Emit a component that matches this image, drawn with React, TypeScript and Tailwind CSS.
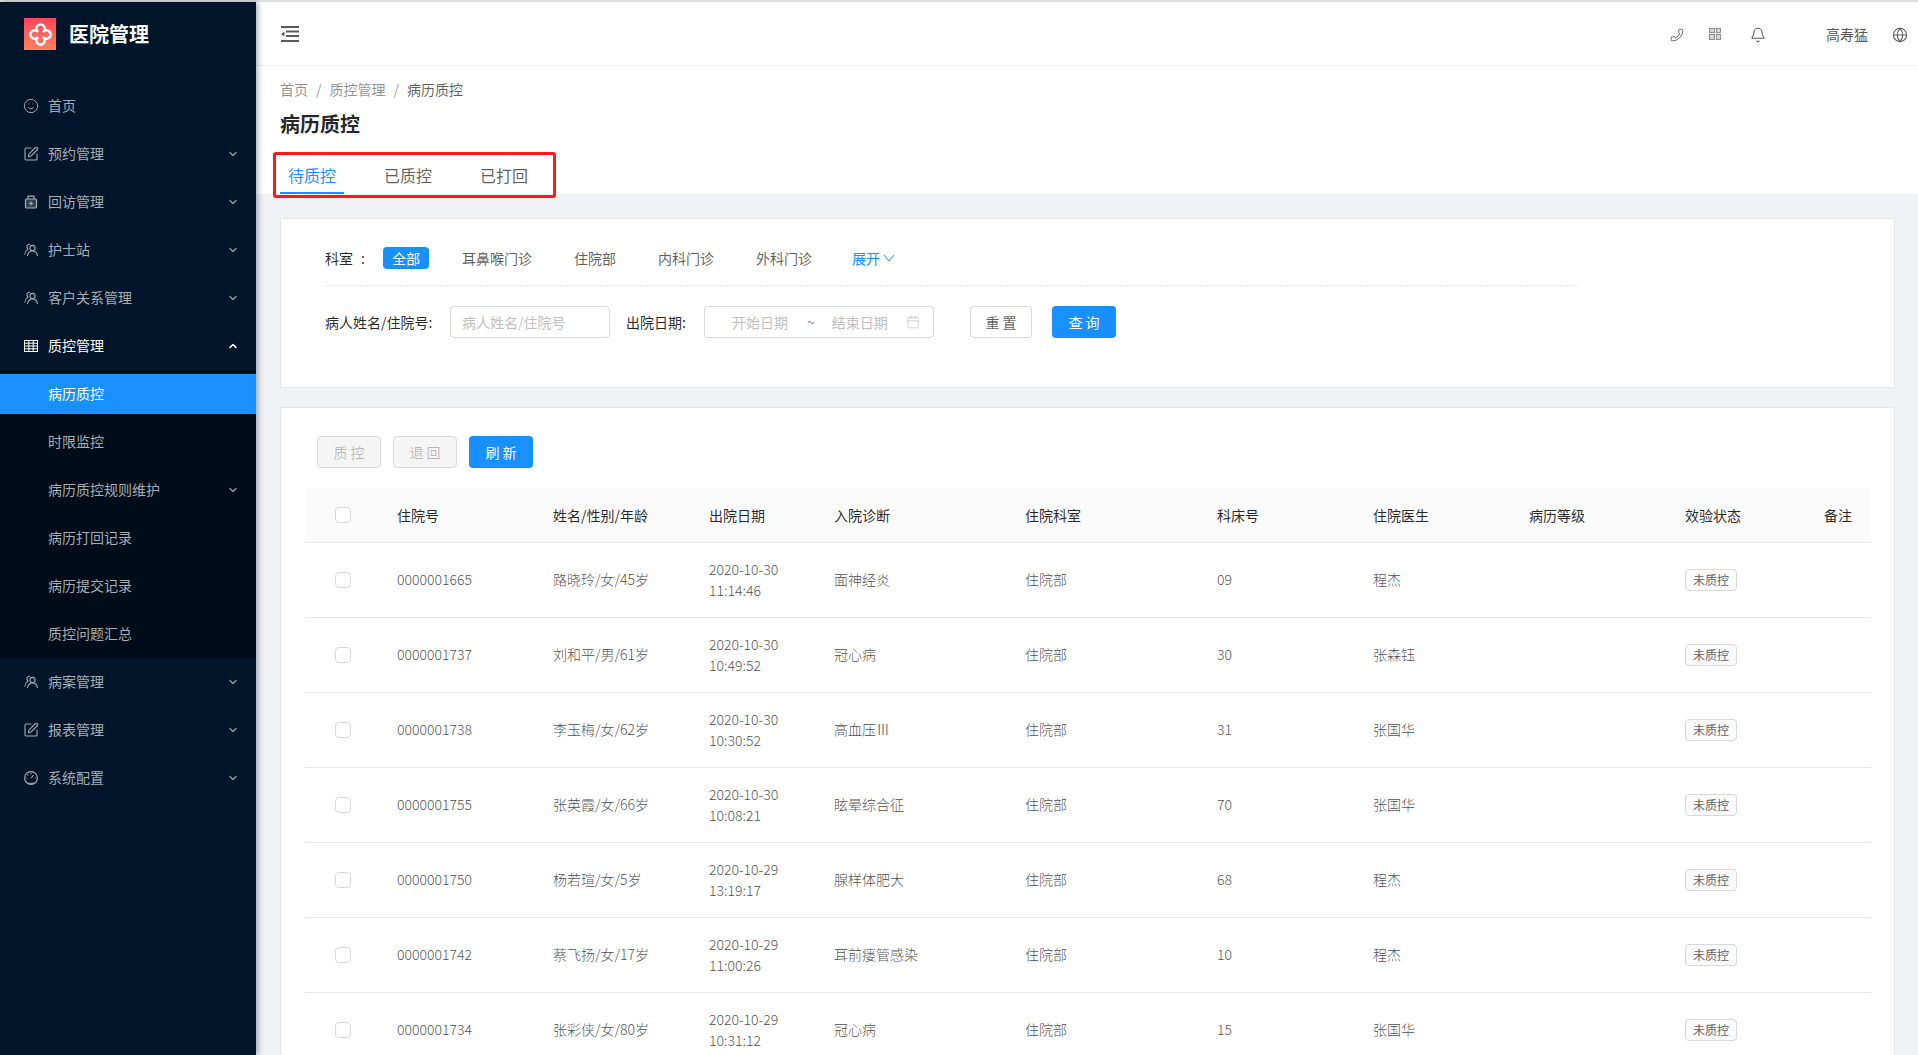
import React from "react";
import { ChevronDown, ChevronUp, Smile, SquarePen, Phone, Bell, Globe, Calendar } from "lucide-react";

const FONT = "font-['Noto_Sans_CJK_SC','Noto_Sans',sans-serif]";

function TeamIcon() {
  return (
    <svg viewBox="-1 -1 16 16" className="h-4 w-4" fill="none" stroke="currentColor" strokeWidth="1.1">
      <circle cx="8.500" cy="5" r="2.600" />
      <path d="M3.500 13c.4-3 2.300-5 5-5s4.600 2 5 5" />
      <path d="M6.200 1.300C4.400.9 3 2.300 3 3.900c0 .9.4 1.700 1 2.200C2.200 7.300 1 9.200.7 11.500" />
    </svg>
  );
}

function MedIcon() {
  return (
    <svg viewBox="-1 -1 16 16" className="h-4 w-4" fill="none" stroke="currentColor" strokeWidth="1.200">
      <rect x="1.500" y="4" width="11" height="9" rx="1" fill="currentColor" fillOpacity="0.3" />
      <path d="M4 4V1.200h6V4" />
      <path d="M7 6.500v4M5 8.500h4" />
    </svg>
  );
}

function GridIcon() {
  return (
    <svg viewBox="-1 -2 16 16" className="h-4 w-4" fill="none" stroke="currentColor" strokeWidth="1">
      <rect x="0.500" y="0.500" width="13" height="11" />
      <path d="M0 3.200h14M0 6h14M0 8.800h14M4.800 0v12M9.200 0v12" />
    </svg>
  );
}

function DashIcon() {
  return (
    <svg viewBox="-1 -1 16 16" className="h-4 w-4" fill="none" stroke="currentColor" strokeWidth="1.100">
      <circle cx="7" cy="7" r="6.400" />
      <path d="M7 7l2.600-3M7 2v1.200M2.700 7H1.700M12.300 7h-1M3.500 3.500l.8.8M3 12.200h8" />
    </svg>
  );
}

function ToggleIcon() {
  return (
    <svg viewBox="0 0 18 16" className="h-4 w-[18px]" fill="currentColor">
      <rect x="0" y="0" width="18" height="2" />
      <rect x="5" y="4.500" width="13" height="2" />
      <rect x="5" y="9" width="13" height="2" />
      <rect x="0" y="14" width="18" height="2" />
      <path d="M3.500 5.500v5L0 8z" />
    </svg>
  );
}

function Logo() {
  return (
    <div className="flex h-8 w-8 items-center justify-center bg-gradient-to-b from-[#ff4458] to-[#ff7d62]">
      <svg viewBox="0 0 24 24" className="h-[25px] w-[25px]" fill="none" stroke="#fff" strokeWidth="2.500" strokeLinejoin="round">
        <path d="M9 9A4 4 0 1 1 15 9 4 4 0 1 1 15 15 4 4 0 1 1 9 15 4 4 0 1 1 9 9Z" />
      </svg>
    </div>
  );
}

type Item = { icon?: React.ReactNode; label: string; arrow?: "down" | "up"; active?: boolean; selected?: boolean };

function MenuRow({ icon, label, arrow, active, selected }: Item) {
  return (
    <div
      className={`my-1 flex h-10 shrink-0 items-center pr-[17px] text-sm ${selected ? "bg-[#1890ff] text-white" : active ? "text-white" : "text-[#a6adb4]"}`}
    >
      <div className="flex w-[48px] shrink-0 justify-end pr-[9px]">{icon}</div>
      <span className="flex-1 pb-[2px]">{label}</span>
      {arrow === "down" && <ChevronDown size={12} strokeWidth={3} className="text-[#8c959e]" />}
      {arrow === "up" && <ChevronUp size={12} strokeWidth={3} className="text-white" />}
    </div>
  );
}

function Sidebar() {
  const ic = "h-4 w-4";
  return (
    <aside className="z-10 flex w-[256px] shrink-0 flex-col bg-[#001529] shadow-[2px_0_6px_rgba(0,21,41,0.35)]">
      <div className="flex h-[64px] shrink-0 items-center pl-6">
        <Logo />
        <span className="ml-[13px] text-[20px] font-semibold text-white">医院管理</span>
      </div>
      <nav className="flex flex-col pt-4">
        <MenuRow icon={<Smile className={ic} strokeWidth={1.4} />} label="首页" />
        <MenuRow icon={<SquarePen className={ic} strokeWidth={1.6} />} label="预约管理" arrow="down" />
        <MenuRow icon={<MedIcon />} label="回访管理" arrow="down" />
        <MenuRow icon={<TeamIcon />} label="护士站" arrow="down" />
        <MenuRow icon={<TeamIcon />} label="客户关系管理" arrow="down" />
        <MenuRow icon={<GridIcon />} label="质控管理" arrow="up" active />
        <div className="flex flex-col bg-[#000c17]">
          <MenuRow label="病历质控" selected />
          <MenuRow label="时限监控" />
          <MenuRow label="病历质控规则维护" arrow="down" />
          <MenuRow label="病历打回记录" />
          <MenuRow label="病历提交记录" />
          <MenuRow label="质控问题汇总" />
        </div>
        <MenuRow icon={<TeamIcon />} label="病案管理" arrow="down" />
        <MenuRow icon={<SquarePen className={ic} strokeWidth={1.6} />} label="报表管理" arrow="down" />
        <MenuRow icon={<DashIcon />} label="系统配置" arrow="down" />
      </nav>
    </aside>
  );
}

function Header() {
  return (
    <header className="flex h-[64px] shrink-0 items-center border-b border-[#f0f0f0] bg-white pl-[25px] pr-[10px] text-[#595959]">
      <ToggleIcon />
      <div className="ml-auto flex items-center">
        <Phone size={14} strokeWidth={1.6} className="mr-[25px] mt-[3px] -scale-x-100" />
        <div className="mr-[29px] grid h-3 w-3 grid-cols-2 gap-px">
          <span className="border border-[#8c8c8c] bg-[#d9d9d9]" />
          <span className="border border-[#8c8c8c] bg-[#d9d9d9]" />
          <span className="border border-[#8c8c8c] bg-[#d9d9d9]" />
          <span className="border border-[#8c8c8c] bg-[#d9d9d9]" />
        </div>
        <Bell size={16} strokeWidth={1.6} className="mr-[60px] mt-[2px]" />
        <span className="mr-[24px] text-sm">高寿猛</span>
        <Globe size={16} strokeWidth={1.6} className="mt-[2px]" />
      </div>
    </header>
  );
}

function PageHead() {
  const tabs = ["待质控", "已质控", "已打回"];
  return (
    <div className="relative shrink-0 bg-white pl-6">
      <div className="flex h-[33px] items-end text-sm text-[#00000073]">
        <span>首页</span>
        <span className="mx-2">/</span>
        <span>质控管理</span>
        <span className="mx-2">/</span>
        <span className="text-[#000000a6]">病历质控</span>
      </div>
      <h1 className="mt-[11px] h-[28px] text-[20px] font-semibold leading-7 text-[#000000d9]">病历质控</h1>
      <div className="mt-[14px] flex h-[42px] text-base">
        {tabs.map((t, i) => (
          <div
            key={t}
            className={`mr-8 flex h-[42px] w-16 items-end justify-center border-b-2 pb-[5px] ${i === 0 ? "border-[#1890ff] text-[#1890ff]" : "border-transparent text-[#000000a6]"}`}
          >
            {t}
          </div>
        ))}
      </div>
      <div className="absolute left-[17px] top-[86px] h-[46px] w-[283px] rounded-[3px] border-[3px] border-[#ff1a1a]" />
    </div>
  );
}

function Filter() {
  const depts = ["耳鼻喉门诊", "住院部", "内科门诊", "外科门诊"];
  return (
    <section className="ml-6 mr-[23px] mt-6 h-[170px] shrink-0 border border-[#e8e8e8] bg-white pl-11 pt-[28px] text-sm">
      <div className="flex h-[22px] items-center text-[#000000a6]">
        <span className="w-[58px] text-[#000000d9]">科室<span className="ml-2">:</span></span>
        <span className="mr-6 rounded bg-[#1890ff] px-[9px] leading-[22px] text-white">全部</span>
        {depts.map((d) => (
          <span key={d} className="mr-6 px-[9px]">{d}</span>
        ))}
        <span className="ml-[7px] flex items-center text-[#1890ff]">
          展开
          <svg viewBox="0 0 12 8" className="ml-[3px] h-2 w-3" fill="none" stroke="currentColor" strokeWidth="1">
            <path d="M1 1l5 6 5-6" />
          </svg>
        </span>
      </div>
      <div className="mt-[16px] w-[1253px] border-t border-dashed border-[#e8e8e8]" />
      <div className="mt-[20px] flex h-8 items-center">
        <span className="w-[125px] text-[#000000d9]">病人姓名/住院号:</span>
        <div className="flex h-8 w-[160px] items-center rounded border border-[#d9d9d9] pl-[11px] text-[#bfbfbf]">病人姓名/住院号</div>
        <span className="ml-4 w-[78px] text-[#000000d9]">出院日期:</span>
        <div className="flex h-8 w-[230px] items-center rounded border border-[#d9d9d9] text-[#bfbfbf]">
          <span className="ml-[27px]">开始日期</span>
          <span className="ml-[19px] text-[#8c8c8c]">~</span>
          <span className="ml-[17px]">结束日期</span>
          <Calendar size={14} strokeWidth={1.2} className="ml-[18px]" />
        </div>
        <button className="ml-9 h-8 w-[62px] rounded border border-[#d9d9d9] bg-white text-[#000000a6]">重 置</button>
        <button className="ml-5 h-8 w-16 rounded bg-[#1890ff] text-white">查 询</button>
      </div>
    </section>
  );
}

const rows = [
  ["0000001665", "路晓玲/女/45岁", "2020-10-30", "11:14:46", "面神经炎", "09", "程杰"],
  ["0000001737", "刘和平/男/61岁", "2020-10-30", "10:49:52", "冠心病", "30", "张森钰"],
  ["0000001738", "李玉梅/女/62岁", "2020-10-30", "10:30:52", "高血压Ⅲ", "31", "张国华"],
  ["0000001755", "张英霞/女/66岁", "2020-10-30", "10:08:21", "眩晕综合征", "70", "张国华"],
  ["0000001750", "杨若瑄/女/5岁", "2020-10-29", "13:19:17", "腺样体肥大", "68", "程杰"],
  ["0000001742", "蔡飞扬/女/17岁", "2020-10-29", "11:00:26", "耳前瘘管感染", "10", "程杰"],
  ["0000001734", "张彩侠/女/80岁", "2020-10-29", "10:31:12", "冠心病", "15", "张国华"],
];

function Check() {
  return <span className="mx-auto block h-4 w-4 rounded-sm border border-[#d9d9d9] bg-white" />;
}

function DataTable() {
  const th = "px-4 text-left font-normal";
  const td = "px-4 pb-[2px]";
  return (
    <section className="ml-6 mr-[23px] mt-[19px] shrink-0 border border-[#e8e8e8] bg-white pb-6 pl-6 pr-6 pt-7 text-sm">
      <div className="flex gap-3 pl-[12px]">
        <button className="h-8 w-16 rounded border border-[#d9d9d9] bg-[#f5f5f5] text-[#00000040]">质 控</button>
        <button className="h-8 w-16 rounded border border-[#d9d9d9] bg-[#f5f5f5] text-[#00000040]">退 回</button>
        <button className="h-8 w-16 rounded bg-[#1890ff] text-white">刷 新</button>
      </div>
      <table className="mt-5 w-[1566px] table-fixed border-collapse text-[#000000b8]">
        <colgroup>
          <col className="w-[76px]" />
          <col className="w-[156px]" />
          <col className="w-[156px]" />
          <col className="w-[125px]" />
          <col className="w-[191px]" />
          <col className="w-[192px]" />
          <col className="w-[156px]" />
          <col className="w-[156px]" />
          <col className="w-[156px]" />
          <col className="w-[139px]" />
          <col className="w-[63px]" />
        </colgroup>
        <thead>
          <tr className="h-[54px] border-b border-[#e8e8e8] bg-[#fafafa] text-[#000000d9]">
            <th className="font-normal"><Check /></th>
            <th className={th}>住院号</th>
            <th className={th}>姓名/性别/年龄</th>
            <th className={th}>出院日期</th>
            <th className={th}>入院诊断</th>
            <th className={th}>住院科室</th>
            <th className={th}>科床号</th>
            <th className={th}>住院医生</th>
            <th className={th}>病历等级</th>
            <th className={th}>效验状态</th>
            <th className={th}>备注</th>
          </tr>
        </thead>
        <tbody className="font-light">
          {rows.map((r) => (
            <tr key={r[0]} className="h-[75px] border-b border-[#e8e8e8]">
              <td><Check /></td>
              <td className={td}>{r[0]}</td>
              <td className={td}>{r[1]}</td>
              <td className="px-4 leading-[21px]">{r[2]}<br />{r[3]}</td>
              <td className={td}>{r[4]}</td>
              <td className={td}>住院部</td>
              <td className={td}>{r[5]}</td>
              <td className={td}>{r[6]}</td>
              <td className="px-4"></td>
              <td className="px-4">
                <span className="inline-block h-[22px] rounded border border-[#d9d9d9] bg-[#fafafa] px-[7px] text-xs font-normal leading-5 text-[#000000a6]">未质控</span>
              </td>
              <td className="px-4"></td>
            </tr>
          ))}
        </tbody>
      </table>
    </section>
  );
}

export default function App() {
  return (
    <div className={`flex h-screen flex-col overflow-hidden bg-[#f0f2f5] ${FONT}`}>
      <div className="h-0.5 shrink-0 bg-[#e0e0e0]" />
      <div className="flex min-h-0 flex-1">
        <Sidebar />
        <main className="flex min-w-0 flex-1 flex-col overflow-hidden">
          <Header />
          <PageHead />
          <Filter />
          <DataTable />
        </main>
      </div>
    </div>
  );
}
